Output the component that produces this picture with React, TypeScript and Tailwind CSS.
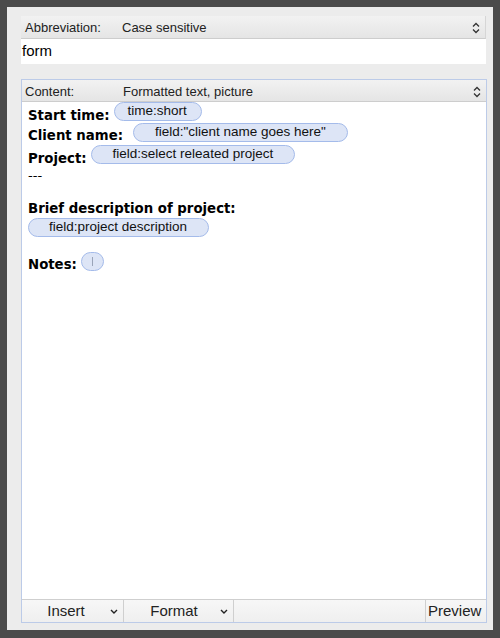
const UpDown = () => (
  <svg width="8" height="12" viewBox="0 0 8 12" className="shrink-0">
    <path d="M1 4.5 L4 1.5 L7 4.5 M1 7.5 L4 10.5 L7 7.5" fill="none" stroke="#333" strokeWidth="1.3" />
  </svg>
)

const Down = () => (
  <svg width="8" height="5" viewBox="0 0 8 5" className="shrink-0">
    <path d="M1 1 L4 4 L7 1" fill="none" stroke="#222" strokeWidth="1.4" />
  </svg>
)

const Pill = ({ children, className = '' }: { children?: React.ReactNode; className?: string }) => (
  <span
    className={`inline-flex items-center h-[19px] rounded-full border-[1.5px] border-[#a4bbea] bg-[#dde5f6] text-[13.5px] text-[#111] font-['Liberation_Sans',sans-serif] font-normal whitespace-nowrap ${className}`}
  >
    {children}
  </span>
)

const Label = ({ children }: { children: React.ReactNode }) => (
  <span className="font-['DejaVu_Sans',sans-serif] font-bold text-[13.3px] leading-[15px] text-black whitespace-nowrap">
    {children}
  </span>
)

export default function App() {
  return (
    <div className="w-[500px] h-[638px] bg-[#4b4b4b] pt-[7px] pl-[7px] font-['Liberation_Sans',sans-serif]">
      <div className="w-[486px] h-[623px] bg-[#ececec] pl-[14px] pt-[9px]">
        {/* Abbreviation */}
        <div className="w-[465px]">
          <div className="h-[23px] pt-[2px] flex items-center bg-gradient-to-b from-[#f2f2f2] to-[#e5e5e5] border-b border-[#cdcdcd] border-r border-r-[#d6d6d6] text-[13px] text-[#222]">
            <span className="w-[101px] pl-[4px]">Abbreviation:</span>
            <span className="flex-1">Case sensitive</span>
            <span className="pr-[5px]"><UpDown /></span>
          </div>
          <div className="h-[25px] bg-white flex items-center pl-[1px] text-[15px] text-black">form</div>
        </div>

        {/* Content */}
        <div className="mt-[15px] w-[466px] h-[544px] border border-[#bccbe8] flex flex-col">
          <div className="h-[22px] pt-[2px] shrink-0 flex items-center bg-gradient-to-b from-[#f2f2f2] to-[#e5e5e5] border-b border-[#cdcdcd] text-[13px] text-[#222]">
            <span className="w-[101px] pl-[3px]">Content:</span>
            <span className="flex-1">Formatted text, picture</span>
            <span className="pr-[5px]"><UpDown /></span>
          </div>

          <div className="flex-1 bg-white pl-[6px]">
            <div className="flex items-end h-[21px]">
              <Label>Start time:</Label>
              <Pill className="ml-[4px] mb-[2px] pl-[13px] pr-[14px]">time:short</Pill>
            </div>
            <div className="flex items-end h-[20px]">
              <Label>Client name:</Label>
              <Pill className="ml-[10px] mb-[1px] pl-[21px] pr-[21px]">field:"client name goes here"</Pill>
            </div>
            <div className="flex items-end h-[23px]">
              <Label>Project:</Label>
              <Pill className="ml-[4px] mb-[2px] pl-[21px] pr-[21px]">field:select releated project</Pill>
            </div>
            <div className="flex items-end h-[17px]">
              <span className="font-['DejaVu_Sans',sans-serif] text-[13px] leading-[15px] text-black">---</span>
            </div>
            <div className="flex items-end h-[33px]">
              <Label>Brief description of project:</Label>
            </div>
            <div className="flex items-end h-[21px]">
              <Pill className="pl-[20px] pr-[21px]">field:project description</Pill>
            </div>
            <div className="flex items-end h-[35px]">
              <Label>Notes:</Label>
              <Pill className="ml-[4px] mb-[1px] w-[23px] justify-center">
                <span className="block w-px h-[9px] bg-[#9aa4b8]" />
              </Pill>
            </div>
          </div>

          <div className="h-[23px] shrink-0 flex bg-gradient-to-b from-[#f7f7f7] to-[#efefef] border-t border-[#cfcfcf] text-[15px] text-[#222]">
            <div className="w-[102px] flex items-center border-r border-[#cfcfcf]">
              <span className="flex-1 text-center">Insert</span>
              <span className="pr-[5px]"><Down /></span>
            </div>
            <div className="w-[110px] flex items-center border-r border-[#cfcfcf]">
              <span className="flex-1 text-center pl-[4px]">Format</span>
              <span className="pr-[5px]"><Down /></span>
            </div>
            <div className="flex-1 border-r border-[#cfcfcf]" />
            <div className="w-[60px] flex items-center pl-[2px]">Preview</div>
          </div>
        </div>
      </div>
    </div>
  )
}
